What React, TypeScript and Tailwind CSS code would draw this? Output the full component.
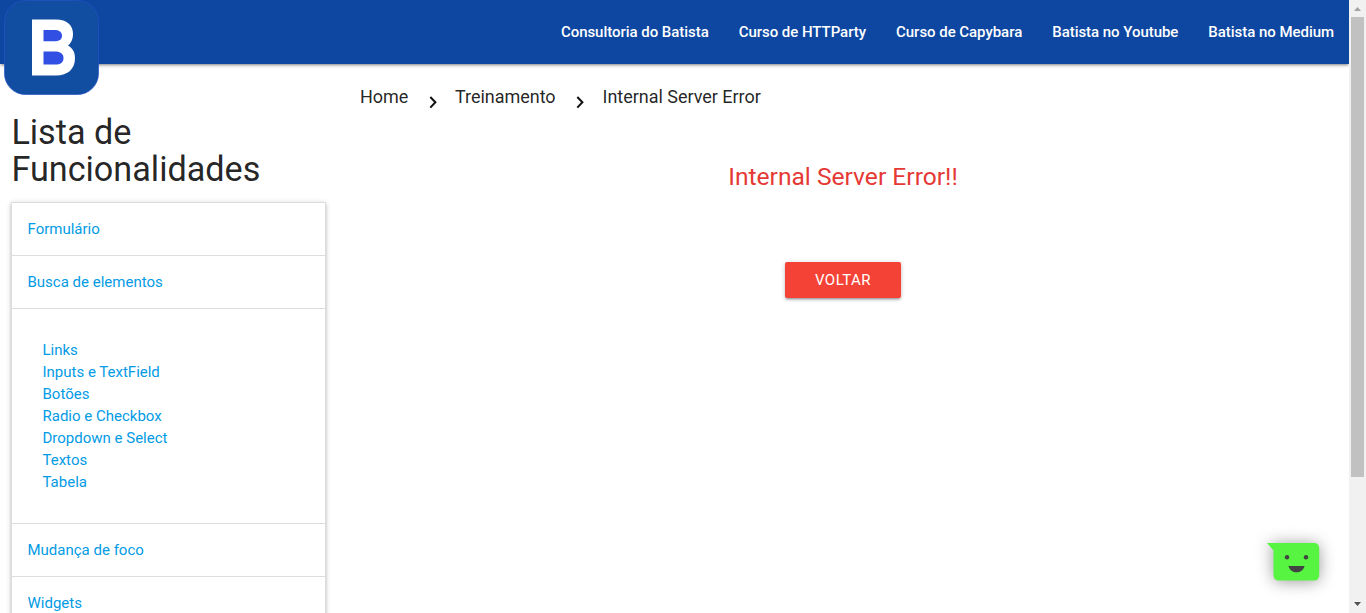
import React from "react";

const navLinks = [
  "Consultoria do Batista",
  "Curso de HTTParty",
  "Curso de Capybara",
  "Batista no Youtube",
  "Batista no Medium",
];

const elementLinks = [
  "Links",
  "Inputs e TextField",
  "Botões",
  "Radio e Checkbox",
  "Dropdown e Select",
  "Textos",
  "Tabela",
];

function Logo() {
  return (
    <svg className="absolute left-1 top-0" width="95" height="95" viewBox="0 0 95 95" role="img" aria-label="Batista">
      <rect x="0.5" y="0.5" width="94" height="94" rx="21" fill="#114da1" stroke="#2451c8" strokeWidth="0.7" />
      <path
        d="M28 19.5H52C63 19.5 69 25 69 34C69 40 66.5 43.5 64 45.5C68.500 48 71 52 71 58C71 69 64 75.500 52 75.500H28Z"
        fill="#fff"
      />
      <path d="M39.500 30H50C55 30 58 32 58 35.700C58 39.500 55 41.200 50 41.200H39.500Z" fill="#324fe4" />
      <path d="M39.500 51.500H51C56.500 51.500 59.500 54 59.500 58C59.500 62.500 56.500 64.600 51 64.600H39.500Z" fill="#324fe4" />
    </svg>
  );
}

function Chevron() {
  return (
    <svg className="mt-[30px] h-4 w-4 shrink-0" viewBox="0 0 16 16" fill="none" stroke="#111" strokeWidth="2">
      <path d="M5.300 3L10.400 8.300L5.300 13.600" />
    </svg>
  );
}

function Header() {
  return (
    <header className="relative z-10 h-16 shrink-0 bg-[#0d47a1] shadow-[0_2px_2px_0_rgba(0,0,0,0.14),0_3px_1px_-2px_rgba(0,0,0,0.12),0_1px_5px_0_rgba(0,0,0,0.2)]">
      <Logo />
      <nav className="flex h-16 justify-end text-[15px] font-medium leading-16 tracking-[-0.04px] text-white">
        {navLinks.map((label) => (
          <a key={label} href="#" className="whitespace-nowrap px-[15px]">
            {label}
          </a>
        ))}
      </nav>
    </header>
  );
}

function SectionTitle({ children }: { children: React.ReactNode }) {
  return (
    <a href="#" className="block h-[53px] border-b border-[#ddd] px-[15.5px] py-[15px]">
      {children}
    </a>
  );
}

function Sidebar() {
  return (
    <aside className="w-[337px] shrink-0 pl-[11px] pr-[11px] pt-[50px]">
      <h4 className="mb-[14px] pl-[0.4px] text-[34.2px] leading-[37px]">
        Lista de Funcionalidades
      </h4>
      <div className="border border-[#ddd] text-[15px] leading-[22px] text-[#039be5] shadow-[0_2px_2px_0_rgba(0,0,0,0.14),0_3px_1px_-2px_rgba(0,0,0,0.12),0_1px_5px_0_rgba(0,0,0,0.2)]">
        <SectionTitle>Formulário</SectionTitle>
        <SectionTitle>Busca de elementos</SectionTitle>
        <ul className="border-b border-[#ddd] px-[30.5px] py-[30px]">
          {elementLinks.map((label) => (
            <li key={label}>
              <a href="#">{label}</a>
            </li>
          ))}
        </ul>
        <SectionTitle>Mudança de foco</SectionTitle>
        <SectionTitle>Widgets</SectionTitle>
      </div>
    </aside>
  );
}

function Scrollbar() {
  return (
    <div className="flex w-[17px] shrink-0 flex-col items-center bg-[#f1f1f1]">
      <svg width="17" height="17" viewBox="0 0 17 17" className="shrink-0">
        <path d="M5 11L8.500 7L12 11Z" fill="#a3a3a3" />
      </svg>
      <div className="h-[460px] w-[13px] shrink-0 bg-[#c1c1c1]" />
      <svg width="17" height="17" viewBox="0 0 17 17" className="mt-auto shrink-0">
        <path d="M5 6L8.500 10L12 6Z" fill="#505050" />
      </svg>
    </div>
  );
}

function ChatBubble() {
  return (
    <button
      aria-label="Chat"
      className="fixed left-[1267px] top-[543px] z-20 h-[38px] w-[53px] drop-shadow-[0_1px_8px_rgba(0,0,0,0.4)]"
    >
      <svg width="53" height="38" viewBox="0 0 53 38">
        <path d="M0 0H47Q52.200 0 52.200 5.500V32Q52.200 37.500 47 37.500H12Q6.500 37.500 6.500 32V7.500Z" fill="#57f542" />
        <circle cx="20" cy="14.300" r="2.200" fill="#424242" />
        <circle cx="39" cy="14.300" r="2.200" fill="#424242" />
        <path d="M21.500 23H37.500C36.500 27 33.500 29.300 29.500 29.300C25.500 29.300 22.500 27 21.500 23Z" fill="#424242" />
      </svg>
    </button>
  );
}

export default function App() {
  return (
    <div className="flex h-[613px] w-[1366px] overflow-hidden bg-white font-[Roboto,sans-serif] text-black/87">
      <div className="flex w-[1349px] shrink-0 flex-col overflow-hidden">
        <Header />
        <div className="flex min-h-0 flex-1 items-start">
          <Sidebar />
          <main className="flex-1">
            <div className="flex h-16 pl-[23px] text-[18px] leading-[66px] tracking-[-0.03px]">
              <a href="#" className="w-[65px]">Home</a>
              <Chevron />
              <a href="#" className="ml-[14px] w-[117px]">Treinamento</a>
              <Chevron />
              <a href="#" className="ml-[14.600px]">Internal Server Error</a>
            </div>
            <div className="flex flex-col items-center pt-[35px]">
              <h5 className="text-[24.6px] leading-[27px] text-[#e53935]">Internal Server Error!!</h5>
              <button className="mt-[72px] h-9 w-[116px] rounded-[2px] bg-[#f44336] text-[15px] leading-9 tracking-[0.5px] text-white shadow-[0_2px_2px_0_rgba(0,0,0,0.14),0_3px_1px_-2px_rgba(0,0,0,0.12),0_1px_5px_0_rgba(0,0,0,0.2)]">
                VOLTAR
              </button>
            </div>
          </main>
        </div>
      </div>
      <Scrollbar />
      <ChatBubble />
    </div>
  );
}
